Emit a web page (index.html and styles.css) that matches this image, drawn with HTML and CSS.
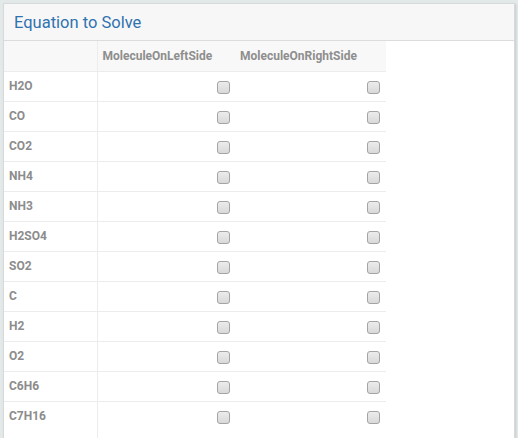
FILE: index.html
```html
<!DOCTYPE html>
<html>
<head>
<meta charset="utf-8">
<link rel="stylesheet" href="styles.css">
</head>
<body>
<div class="panel">
  <div class="panel-head">Equation to Solve</div>
  <div class="panel-body">
    <table class="grid">
      <thead>
        <tr><th class="c1"></th><th class="c2">MoleculeOnLeftSide</th><th class="c3">MoleculeOnRightSide</th></tr>
      </thead>
      <tbody>
        <tr><td class="c1">H2O</td><td class="c2"><input type="checkbox"></td><td class="c3"><input type="checkbox"></td></tr>
        <tr><td class="c1">CO</td><td class="c2"><input type="checkbox"></td><td class="c3"><input type="checkbox"></td></tr>
        <tr><td class="c1">CO2</td><td class="c2"><input type="checkbox"></td><td class="c3"><input type="checkbox"></td></tr>
        <tr><td class="c1">NH4</td><td class="c2"><input type="checkbox"></td><td class="c3"><input type="checkbox"></td></tr>
        <tr><td class="c1">NH3</td><td class="c2"><input type="checkbox"></td><td class="c3"><input type="checkbox"></td></tr>
        <tr><td class="c1">H2SO4</td><td class="c2"><input type="checkbox"></td><td class="c3"><input type="checkbox"></td></tr>
        <tr><td class="c1">SO2</td><td class="c2"><input type="checkbox"></td><td class="c3"><input type="checkbox"></td></tr>
        <tr><td class="c1">C</td><td class="c2"><input type="checkbox"></td><td class="c3"><input type="checkbox"></td></tr>
        <tr><td class="c1">H2</td><td class="c2"><input type="checkbox"></td><td class="c3"><input type="checkbox"></td></tr>
        <tr><td class="c1">O2</td><td class="c2"><input type="checkbox"></td><td class="c3"><input type="checkbox"></td></tr>
        <tr><td class="c1">C6H6</td><td class="c2"><input type="checkbox"></td><td class="c3"><input type="checkbox"></td></tr>
        <tr class="last"><td class="c1">C7H16</td><td class="c2"><input type="checkbox"></td><td class="c3"><input type="checkbox"></td></tr>
      </tbody>
    </table>
  </div>
</div>
</body>
</html>
```
FILE: styles.css
```css
html, body {
  margin: 0;
  padding: 0;
  height: 100%;
  overflow: hidden;
}
body {
  background: #e3e8e8;
  font-family: Roboto, "Noto Sans", sans-serif;
  padding: 3px 0 0 3px;
  box-sizing: border-box;
}
.panel {
  width: 510px;
  height: 460px;
  background: #ffffff;
  border: 1px solid #d6dada;
  box-shadow: 1px 1px 2px rgba(0,0,0,0.12);
}
.panel-head {
  height: 37px;
  box-sizing: border-box;
  background: #f7f7f7;
  border-bottom: 1px solid #dcdcdc;
  padding: 8px 0 0 10px;
  font-size: 16.5px;
  color: #2f72b0;
  line-height: 22px;
}
.grid {
  border-collapse: collapse;
  table-layout: fixed;
  width: 382px;
  font-size: 12px;
  font-weight: bold;
  color: #8c8c8c;
}
.grid th, .grid td {
  height: 30px;
  padding: 0 5px;
  box-sizing: border-box;
  border-bottom: 1px solid #ececec;
  vertical-align: middle;
}
.grid th {
  background: #f8f8f8;
  text-align: left;
  color: #8e8e8e;
  height: 30px;
  padding-top: 0;
}
.grid .c1 {
  width: 93px;
  border-right: 1px solid #ececec;
}
.grid .c2 { width: 139px; }
.grid .c3 { width: 150px; }
.grid td.c2, .grid td.c3 {
  text-align: right;
  padding-right: 6px;
}
.grid tr.last td { border-bottom: none; height: 40px; vertical-align: top; padding-top: 7px; }
.grid th.c3 { padding-left: 4px; }
input[type="checkbox"] {
  -webkit-appearance: none;
  appearance: none;
  width: 13px;
  height: 13px;
  margin: 2px 0 0 0;
  border: 1px solid #a4a4a4;
  border-radius: 3px;
  background: linear-gradient(#ececec, #d9d9d9);
  box-sizing: border-box;
  display: inline-block;
  vertical-align: top;
}
```
